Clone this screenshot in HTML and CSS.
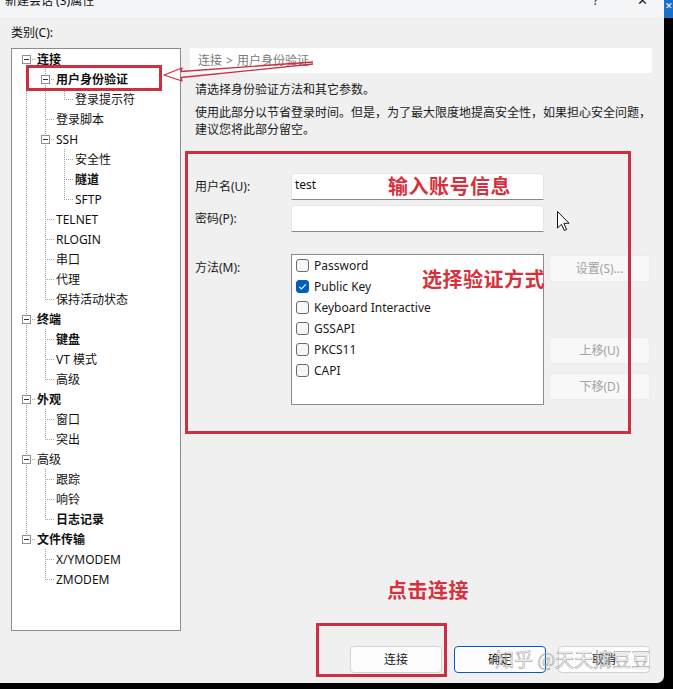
FILE: index.html
```html
<!DOCTYPE html>
<html lang="zh-CN">
<head>
<meta charset="utf-8">
<title>新建会话 (3)属性</title>
<link rel="stylesheet" href="styles.css">
</head>
<body>
<div class="screen">
  <div class="top">
    <div class="window">
      <div class="titlebar">
        <span class="title">新建会话 (3)属性</span>
        <span class="tb-help">?</span>
        <span class="tb-close">✕</span>
      </div>
      <div class="body">
        <div class="cat-label">类别(C):</div>
        <div class="main">
          <div class="tree">
            <div class="row bold"><span class="g g-first"><i class="exp"></i></span><span class="t">连接</span></div>
            <div class="row bold"><span class="g g-pipe"></span><span class="g g-tee"><i class="exp"></i></span><span class="t">用户身份验证</span></div>
            <div class="row"><span class="g g-pipe"></span><span class="g g-pipe"></span><span class="g g-ell"></span><span class="t">登录提示符</span></div>
            <div class="row"><span class="g g-pipe"></span><span class="g g-tee"></span><span class="t">登录脚本</span></div>
            <div class="row"><span class="g g-pipe"></span><span class="g g-tee"><i class="exp"></i></span><span class="t">SSH</span></div>
            <div class="row"><span class="g g-pipe"></span><span class="g g-pipe"></span><span class="g g-tee"></span><span class="t">安全性</span></div>
            <div class="row bold"><span class="g g-pipe"></span><span class="g g-pipe"></span><span class="g g-tee"></span><span class="t">隧道</span></div>
            <div class="row"><span class="g g-pipe"></span><span class="g g-pipe"></span><span class="g g-ell"></span><span class="t">SFTP</span></div>
            <div class="row"><span class="g g-pipe"></span><span class="g g-tee"></span><span class="t">TELNET</span></div>
            <div class="row"><span class="g g-pipe"></span><span class="g g-tee"></span><span class="t">RLOGIN</span></div>
            <div class="row"><span class="g g-pipe"></span><span class="g g-tee"></span><span class="t">串口</span></div>
            <div class="row"><span class="g g-pipe"></span><span class="g g-tee"></span><span class="t">代理</span></div>
            <div class="row"><span class="g g-pipe"></span><span class="g g-ell"></span><span class="t">保持活动状态</span></div>
            <div class="row bold"><span class="g g-tee"><i class="exp"></i></span><span class="t">终端</span></div>
            <div class="row bold"><span class="g g-pipe"></span><span class="g g-tee"></span><span class="t">键盘</span></div>
            <div class="row"><span class="g g-pipe"></span><span class="g g-tee"></span><span class="t">VT 模式</span></div>
            <div class="row"><span class="g g-pipe"></span><span class="g g-ell"></span><span class="t">高级</span></div>
            <div class="row bold"><span class="g g-tee"><i class="exp"></i></span><span class="t">外观</span></div>
            <div class="row"><span class="g g-pipe"></span><span class="g g-tee"></span><span class="t">窗口</span></div>
            <div class="row"><span class="g g-pipe"></span><span class="g g-ell"></span><span class="t">突出</span></div>
            <div class="row"><span class="g g-tee"><i class="exp"></i></span><span class="t">高级</span></div>
            <div class="row"><span class="g g-pipe"></span><span class="g g-tee"></span><span class="t">跟踪</span></div>
            <div class="row"><span class="g g-pipe"></span><span class="g g-tee"></span><span class="t">响铃</span></div>
            <div class="row bold"><span class="g g-pipe"></span><span class="g g-ell"></span><span class="t">日志记录</span></div>
            <div class="row bold"><span class="g g-ell"><i class="exp"></i></span><span class="t">文件传输</span></div>
            <div class="row"><span class="g"></span><span class="g g-tee"></span><span class="t">X/YMODEM</span></div>
            <div class="row"><span class="g"></span><span class="g g-ell"></span><span class="t">ZMODEM</span></div>
          </div>
          <div class="panel">
            <div class="crumb">连接 &gt; 用户身份验证</div>
            <p class="desc">请选择身份验证方法和其它参数。</p>
            <p class="desc desc2">使用此部分以节省登录时间。但是，为了最大限度地提高安全性，如果担心安全问题，<br>建议您将此部分留空。</p>
            <div class="form">
              <label class="flabel">用户名(U):</label>
              <div class="input">test</div>
              <div></div>
              <label class="flabel">密码(P):</label>
              <div class="input"></div>
              <div></div>
              <label class="flabel ftop">方法(M):</label>
              <div class="listbox">
                <div class="opt"><span class="cb"></span>Password</div>
                <div class="opt"><span class="cb on"><svg viewBox="0 0 13 13" width="13" height="13"><path d="M3.2 6.8 L5.4 9 L9.8 4.3" fill="none" stroke="#fff" stroke-width="1.1"/></svg></span>Public Key</div>
                <div class="opt"><span class="cb"></span>Keyboard Interactive</div>
                <div class="opt"><span class="cb"></span>GSSAPI</div>
                <div class="opt"><span class="cb"></span>PKCS11</div>
                <div class="opt"><span class="cb"></span>CAPI</div>
              </div>
              <div class="side-btns">
                <div class="btn disabled">设置(S)...</div>
                <div class="btn disabled move-up">上移(U)</div>
                <div class="btn disabled">下移(D)</div>
              </div>
            </div>
          </div>
        </div>
        <div class="footer">
          <div class="btn action">连接</div>
          <div class="btn action default">确定</div>
          <div class="btn action">取消</div>
        </div>
      </div>
    </div>
    <div class="strip"><div class="strip-blue">✕</div></div>
  </div>
  <div class="bottom"></div>

  <svg class="overlay" width="673" height="689" viewBox="0 0 673 689">
    <rect x="27.5" y="66.5" width="133" height="23" fill="none" stroke="#cc3040" stroke-width="3"/>
    <path d="M313 62 L181 71.5 L182 68 L164 75 L182 81 L181 77.5 L313 64" fill="none" stroke="#cc3040" stroke-width="1.3" stroke-linejoin="round"/>
    <rect x="186.5" y="152.5" width="443" height="280" fill="none" stroke="#cc3040" stroke-width="3"/>
    <rect x="317.5" y="624.5" width="128" height="51" fill="none" stroke="#cc3040" stroke-width="3"/>
    <path d="M557.5 211.5 L557.5 228 L561.5 224.3 L564.3 230.5 L566.6 229.5 L563.9 223.4 L569 223.2 Z" fill="#fff" stroke="#111" stroke-width="1" stroke-linejoin="round"/>
  </svg>
  <div class="note note1">输入账号信息</div>
  <div class="note note2">选择验证方式</div>
  <div class="note note3">点击连接</div>
  <div class="watermark">知乎 @天天摘豆豆</div>
</div>
</body>
</html>
```
FILE: styles.css
```css
:root {
  --dv: repeating-linear-gradient(to bottom, #a0a0a0 0 1px, transparent 1px 2px);
  --dh: repeating-linear-gradient(to right, #a0a0a0 0 1px, transparent 1px 2px);
}
* { box-sizing: border-box; }
body {
  margin: 0;
  width: 673px;
  height: 689px;
  overflow: hidden;
  background: #000;
  font: 12px/17px "Noto Sans", "Noto Sans CJK SC", sans-serif;
  color: #1a1a1a;
}
.screen { position: relative; width: 673px; height: 689px; }
.top { display: flex; height: 683px; }
.window {
  width: 664px;
  flex: none;
  background: #f0f0f0;
  display: flex;
  flex-direction: column;
  border-bottom-right-radius: 7px;
}
.strip { flex: 1; background: #000; }
.strip-blue {
  height: 18px;
  background: #1a6fc6;
  color: #fff;
  font-size: 9px;
  line-height: 12px;
  text-align: center;
}
.bottom { height: 6px; background: #000; }

.titlebar {
  height: 17px;
  background: #f3f5f7;
  display: flex;
  align-items: flex-start;
  overflow: hidden;
  padding-left: 5px;
}
.titlebar span { margin-top: -8px; line-height: 17px; }
.title { font-size: 12px; color: #111; }
.tb-help { margin-left: auto; width: 10px; font-size: 12px; }
.tb-close { margin-left: 34px; margin-right: 16px; font-size: 13px; color: #222; }

.body { flex: 1; padding: 8px 12px 0 11px; display: flex; flex-direction: column; }
.cat-label { height: 16px; line-height: 16px; margin-bottom: 7px; color: #111; }
.main { display: flex; gap: 9px; height: 583px; }

.tree {
  width: 170px;
  flex: none;
  height: 583px;
  background: #fff;
  border: 1px solid #8c8c8c;
  padding-left: 5px;
}
.row { display: flex; height: 20px; align-items: center; color: #111; }
.row.bold .t { font-weight: 700; }
.t { padding-left: 1px; white-space: nowrap; }
.g { width: 19px; height: 20px; flex: none; display: flex; align-items: center; background-repeat: no-repeat; }
.g-pipe { background: var(--dv) 9px 0 / 1px 20px no-repeat; }
.g-tee { background: var(--dh) 9px 10px / 10px 1px no-repeat, var(--dv) 9px 0 / 1px 20px no-repeat; }
.g-ell { background: var(--dh) 9px 10px / 10px 1px no-repeat, var(--dv) 9px 0 / 1px 10px no-repeat; }
.g-first { background: var(--dh) 9px 10px / 10px 1px no-repeat, var(--dv) 9px 10px / 1px 10px no-repeat; }
.exp {
  display: block;
  width: 9px;
  height: 9px;
  margin-left: 5px;
  margin-top: 1px;
  border: 1px solid #8e8e8e;
  background: linear-gradient(#333, #333) center / 5px 1px no-repeat, #fff;
}

.panel { flex: 1; min-width: 0; display: flex; flex-direction: column; }
.crumb {
  height: 25px;
  line-height: 25px;
  background: #fff;
  padding-left: 8px;
  color: #7a7a7a;
  word-spacing: 1px;
}
.desc { margin: 8px 0 0 5px; white-space: nowrap; color: #1a1a1a; }
.desc2 { margin-top: 6px; }

.form {
  margin-top: 35px;
  margin-left: 5px;
  display: grid;
  grid-template-columns: 91px 253px 101px;
  column-gap: 5px;
  grid-template-rows: 27px 27px auto;
  row-gap: 5px;
}
.flabel { align-self: center; color: #1a1a1a; }
.flabel.ftop { align-self: start; padding-top: 5px; }
.form > .listbox, .form > .flabel.ftop, .form > .side-btns { margin-top: 17px; }
.input {
  background: #fff;
  border: 1px solid #e6e6e6;
  border-bottom: 1px solid #8a8a8a;
  border-radius: 3px 3px 0 0;
  padding: 2px 0 0 3px;
  color: #111;
}
.listbox {
  height: 151px;
  background: #fff;
  border: 1px solid #8c8c8c;
  padding-left: 4px;
}
.opt { display: flex; align-items: center; height: 21px; gap: 5px; color: #1a1a1a; }
.cb {
  width: 13px;
  height: 13px;
  border: 1px solid #6a6a6a;
  border-radius: 3px;
  background: #f7f7f7;
  flex: none;
  display: flex;
}
.cb.on { background: #005fb8; border-color: #005fb8; }
.cb.on svg { margin: -1px; }

.side-btns { display: flex; flex-direction: column; gap: 9px; padding-top: 1px; }
.btn {
  height: 27px;
  border-radius: 4px;
  display: flex;
  align-items: center;
  justify-content: center;
}
.btn.disabled {
  background: #f8f8f8;
  border: 1px solid #ececec;
  color: #a2a2a2;
}
.move-up { margin-top: 46px; }

.footer {
  margin-top: 15px;
  display: flex;
  justify-content: flex-end;
  gap: 12px;
  padding-right: 2px;
}
.btn.action {
  width: 92px;
  background: #fdfdfd;
  border: 1px solid #d2d2d2;
  color: #1a1a1a;
}
.btn.action.default { border-color: #005fb8; }

.overlay { position: absolute; left: 0; top: 0; pointer-events: none; }
.note {
  position: absolute;
  font: 700 20px/28px "Noto Sans CJK SC", sans-serif;
  color: #d8303c;
  letter-spacing: 0.5px;
  white-space: nowrap;
}
.note1 { left: 388px; top: 172px; }
.note2 { left: 422px; top: 265px; }
.note3 { left: 387px; top: 576px; }
.watermark {
  position: absolute;
  left: 495px;
  top: 647px;
  font: 19px/24px "Noto Sans CJK SC", sans-serif;
  color: rgba(255, 255, 255, 0.55);
  -webkit-text-stroke: 0.7px rgba(110, 110, 110, 0.55);
  white-space: nowrap;
}
```
